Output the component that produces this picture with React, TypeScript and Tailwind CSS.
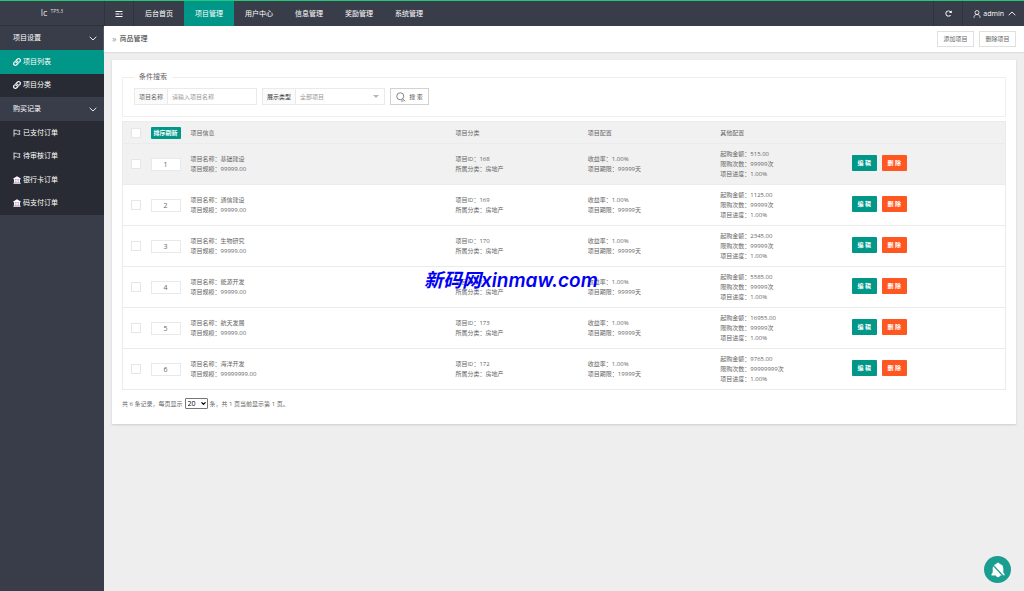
import type { ReactNode } from 'react';
import { FaLink } from 'react-icons/fa';
import { FaRotateRight } from 'react-icons/fa6';

interface Project {
  sort: number;
  name: string;
  scale: string;
  id: number;
  days: string;
  amount: string;
  times: string;
}

const projects: Project[] = [
  { sort: 1, name: '基础建设', scale: '99999.00', id: 168, days: '99999天', amount: '515.00', times: '99999次' },
  { sort: 2, name: '通信建设', scale: '99999.00', id: 169, days: '99999天', amount: '1125.00', times: '99999次' },
  { sort: 3, name: '生物研究', scale: '99999.00', id: 170, days: '99999天', amount: '2345.00', times: '99999次' },
  { sort: 4, name: '能源开发', scale: '99999.00', id: 171, days: '99999天', amount: '5585.00', times: '99999次' },
  { sort: 5, name: '航天发展', scale: '99999.00', id: 173, days: '99999天', amount: '16955.00', times: '99999次' },
  { sort: 6, name: '海洋开发', scale: '99999999.00', id: 172, days: '19999天', amount: '9765.00', times: '99999999次' },
];

const navItems = ['后台首页', '项目管理', '用户中心', '信息管理', '奖励管理', '系统管理'];

const checkboxClass = 'block size-[10px] appearance-none border border-[#e6e6e6] bg-white checked:bg-[#009688]';

function Chevron({ up = false }: { up?: boolean }) {
  return (
    <svg viewBox="0 0 8 5" className="h-[5px] w-2 shrink-0" fill="none" stroke="currentColor" strokeWidth=".9">
      <path d={up ? 'M.7 4.2 4 1l3.3 3.2' : 'M.7.8 4 4 7.3.8'} />
    </svg>
  );
}

function FlagIcon() {
  return (
    <svg viewBox="0 0 16 16" className="size-2" fill="none" stroke="currentColor" strokeWidth="1.5">
      <path d="M2 1v14M2 2.500h5l1.500 1h5.500L12.500 7l1.500 3.500H8.500L7 9.500H2" />
    </svg>
  );
}

function BankIcon() {
  return (
    <svg viewBox="0 0 16 16" className="size-2">
      <path d="M8 .5 15.500 5v1.500H.5V5zM1.500 13h13l1 2.500H.5z" fill="#fff" />
      <path d="M2 6.500h12V13H2z" fill="#d9a3dc" />
      <path d="M2 6.500h2V13H2zM5.300 6.500h2V13h-2zM8.700 6.500h2V13h-2zM12 6.500h2V13h-2z" fill="#fff" />
    </svg>
  );
}

function UserIcon() {
  return (
    <svg viewBox="0 0 16 16" className="size-2" fill="none" stroke="currentColor" strokeWidth="1.6">
      <circle cx="8" cy="5" r="4" />
      <path d="M2 15.500c0-4 2-6.500 6-6.500s6 2.500 6 6.500" />
    </svg>
  );
}

function SearchIcon() {
  return (
    <svg viewBox="0 0 20 20" className="size-[10px]" fill="none" stroke="currentColor" strokeWidth="1.4">
      <circle cx="8.500" cy="8.500" r="7" />
      <path d="m13.500 14 5 4.500M10 18h5" />
    </svg>
  );
}

function MenuGroup({ title, rows, children }: { title: string; rows: string; children: ReactNode }) {
  return (
    <section>
      <button type="button" className="flex h-6 w-full items-center justify-between pr-[7px] pl-[13px]">
        {title}
        <Chevron />
      </button>
      <ul className={`grid auto-rows-fr bg-[#282b33] ${rows}`}>{children}</ul>
    </section>
  );
}

function MenuItem({ icon, label, active = false }: { icon: ReactNode; label: string; active?: boolean }) {
  return (
    <li className={active ? 'bg-[#009688]' : ''}>
      <a href="#" className="flex h-full items-center gap-[2px] pl-[13px]">
        {icon}
        {label}
      </a>
    </li>
  );
}

function ProjectRow({ project, hovered }: { project: Project; hovered: boolean }) {
  return (
    <tr className={`h-[41px] border-t border-[#ebebeb] ${hovered ? 'bg-[#f1f1f1]' : ''}`}>
      <td className="pl-2">
        <input type="checkbox" aria-label={project.name} className={checkboxClass} />
      </td>
      <td className="pl-1">
        <input
          type="text"
          aria-label="排序"
          defaultValue={project.sort}
          className="block h-[13px] w-[30px] border border-[#e9e9e9] bg-white text-center text-[7px]"
        />
      </td>
      <td className="px-[5px]">
        <p>项目名称：{project.name}</p>
        <p>项目规模：{project.scale}</p>
      </td>
      <td className="px-[5px]">
        <p>项目ID：{project.id}</p>
        <p>所属分类：房地产</p>
      </td>
      <td className="px-[5px]">
        <p>收益率：1.00%</p>
        <p>项目期限：{project.days}</p>
      </td>
      <td className="px-[5px]">
        <p>起购金额：{project.amount}</p>
        <p>限购次数：{project.times}</p>
        <p>项目进度：1.00%</p>
      </td>
      <td className="px-1">
        <div className="flex gap-[5px] pb-[2px] font-bold text-white">
          <button type="button" className="h-4 w-[25px] rounded-[1px] bg-[#009688]">编 辑</button>
          <button type="button" className="h-4 w-[25px] rounded-[1px] bg-[#ff5722]">删 除</button>
        </div>
      </td>
    </tr>
  );
}

export default function App() {
  return (
    <div className="flex min-h-screen bg-[#eee] font-['Open_Sans','Noto_Sans_CJK_SC',sans-serif] text-[6px] leading-[10px] text-[#666]">
      <aside className="w-[104px] shrink-0 border-t border-[#20c878] bg-[#393d49] text-[7px] text-white">
        <a href="#" className="flex h-[25px] items-center justify-center border-b border-[#30333d] text-[9px] text-[#ddd]">
          lc<sup className="ml-[3px] text-[5px]">TP5.3</sup>
        </a>
        <MenuGroup title="项目设置" rows="h-[47px]">
          <MenuItem active icon={<FaLink className="size-2" />} label="项目列表" />
          <MenuItem icon={<FaLink className="size-2" />} label="项目分类" />
        </MenuGroup>
        <MenuGroup title="购买记录" rows="h-[94px]">
          <MenuItem icon={<FlagIcon />} label="已支付订单" />
          <MenuItem icon={<FlagIcon />} label="待审核订单" />
          <MenuItem icon={<BankIcon />} label="银行卡订单" />
          <MenuItem icon={<BankIcon />} label="码支付订单" />
        </MenuGroup>
      </aside>

      <div className="flex min-w-0 flex-1 flex-col">
        <header className="flex h-[26px] items-stretch border-t border-[#20c878] bg-[#393d49] text-[7px] text-white">
          <button type="button" aria-label="菜单" className="flex w-[30px] items-center justify-center border-x border-[#30333d]">
            <svg viewBox="0 0 8 8" className="size-2" fill="none" stroke="currentColor" strokeWidth="1">
              <path d="M.5 1.500h7M.5 4h4M5.500 4h2M.5 6.500h7" />
            </svg>
          </button>
          <nav className="flex">
            {navItems.map((item) => (
              <a
                key={item}
                href="#"
                className={`flex w-[50px] items-center justify-center ${item === '项目管理' ? 'bg-[#009688]' : ''}`}
              >
                {item}
              </a>
            ))}
          </nav>
          <button type="button" aria-label="刷新" className="ml-auto flex w-[30px] items-center justify-center border-x border-[#30333d]">
            <FaRotateRight className="size-[7px]" />
          </button>
          <button type="button" className="flex items-center gap-[2px] pr-2 pl-[10px]">
            <UserIcon />
            admin
            <span className="ml-[2px]"><Chevron up /></span>
          </button>
        </header>

        <div className="flex h-[26px] items-center justify-between bg-white px-2 shadow-[0_1px_1px_#ddd]">
          <h1 className="flex gap-[3px] text-[7px] text-[#333]">
            <span className="text-[9px] text-[#999]">»</span>
            商品管理
          </h1>
          <div className="flex gap-[5px]">
            <button type="button" className="h-4 w-[37px] border border-[#e0e0e0] bg-white">添加项目</button>
            <button type="button" className="h-4 w-[37px] border border-[#e0e0e0] bg-white">删除项目</button>
          </div>
        </div>

        <main className="m-2 bg-white px-[10px] pt-3 pb-[15px] shadow-[0_1px_2px_#ccc]">
          <fieldset className="border border-[#eee] px-[11px] pt-[6px] pb-[11px]">
            <legend className="px-[5px] text-[7px]">条件搜索</legend>
            <form className="flex gap-[5px]">
              <div className="flex h-[17px] w-[123px] border border-[#eaeaea]">
                <label htmlFor="name" className="flex w-[33px] items-center justify-center border-r border-[#eaeaea] bg-[#fbfbfb]">项目名称</label>
                <input id="name" type="text" placeholder="请输入项目名称" className="min-w-0 flex-1 px-1 placeholder:text-[#999]" />
              </div>
              <div className="flex h-[17px] w-[123px] border border-[#eaeaea]">
                <label htmlFor="type" className="flex w-[33px] items-center justify-center border-r border-[#eaeaea] bg-[#fbfbfb] text-[#333]">展示类型</label>
                <div className="relative flex flex-1">
                  <select id="type" className="flex-1 appearance-none px-1 text-[#999]">
                    <option>全部项目</option>
                  </select>
                  <svg viewBox="0 0 6 3" className="pointer-events-none absolute top-[6px] right-[5px] h-[3px] w-[6px] fill-[#b5b5b5]">
                    <path d="M0 0h6L3 3z" />
                  </svg>
                </div>
              </div>
              <button type="submit" className="flex h-[17px] w-[39px] items-center justify-center gap-[3px] border border-[#d2d2d2] text-[#555]">
                <SearchIcon />
                搜 索
              </button>
            </form>
          </fieldset>

          <table className="mt-1 w-full table-fixed border border-[#ebebeb] text-left">
            <colgroup>
              <col className="w-6" />
              <col className="w-[39px]" />
              <col className="w-[30%]" />
              <col className="w-[15%]" />
              <col className="w-[15%]" />
              <col className="w-[15%]" />
              <col />
            </colgroup>
            <thead>
              <tr className="h-[22px] bg-[#f1f1f1]">
                <th className="pl-2">
                  <input type="checkbox" aria-label="全选" className={checkboxClass} />
                </th>
                <th className="pl-1">
                  <button type="button" className="block h-3 w-[30px] rounded-[1px] bg-[#009688] font-bold text-white">排序刷新</button>
                </th>
                <th className="px-[5px] font-normal">项目信息</th>
                <th className="px-[5px] font-normal">项目分类</th>
                <th className="px-[5px] font-normal">项目配置</th>
                <th className="px-[5px] font-normal">其他配置</th>
                <th />
              </tr>
            </thead>
            <tbody>
              {projects.map((project) => (
                <ProjectRow key={project.id} project={project} hovered={project.sort === 1} />
              ))}
            </tbody>
          </table>

          <div className="mt-2 flex items-center gap-[2px]">
            <span>共 6 条记录，每页显示</span>
            <div className="relative">
              <select
                aria-label="每页显示"
                className="block h-[11px] w-[23px] appearance-none rounded-[1px] border border-[#777] bg-white pl-[2px] text-[7px] leading-[9px] text-black"
              >
                <option>20</option>
              </select>
              <svg viewBox="0 0 5 3" className="pointer-events-none absolute top-1 right-[2px] h-[3px] w-[5px]" fill="none" stroke="#000" strokeWidth="1.2">
                <path d="M.5.3l2 2 2-2" />
              </svg>
            </div>
            <span>条，共 1 页当前显示第 1 页。</span>
          </div>
        </main>
      </div>

      <div className="pointer-events-none absolute top-[268px] left-[424px] font-['Inter','Noto_Sans_CJK_SC',sans-serif] text-[19px] leading-[26px] font-semibold text-[#0000f5] italic">
        新码网xinmaw.com
      </div>

      <button type="button" aria-label="通知" className="fixed right-[13px] bottom-2 flex size-[27px] items-center justify-center rounded-full bg-[#1a9e8f]">
        <svg viewBox="0 0 16 16" className="size-4">
          <path d="M8 .8c1 0 1.500.6 1.700 1.300 2.300.5 3.600 2.100 3.600 4.400v4l1.200 1.500v1.500H10c-.2 1.200-1 1.700-2 1.700s-1.800-.5-2-1.700H1.500V12l1.200-1.500v-4c0-2.300 1.300-3.900 3.600-4.400C6.500 1.400 7 .8 8 .8z" fill="#fff" />
          <path d="m2 2 12 13" stroke="#1a9e8f" strokeWidth="1.200" />
        </svg>
      </button>
    </div>
  );
}
